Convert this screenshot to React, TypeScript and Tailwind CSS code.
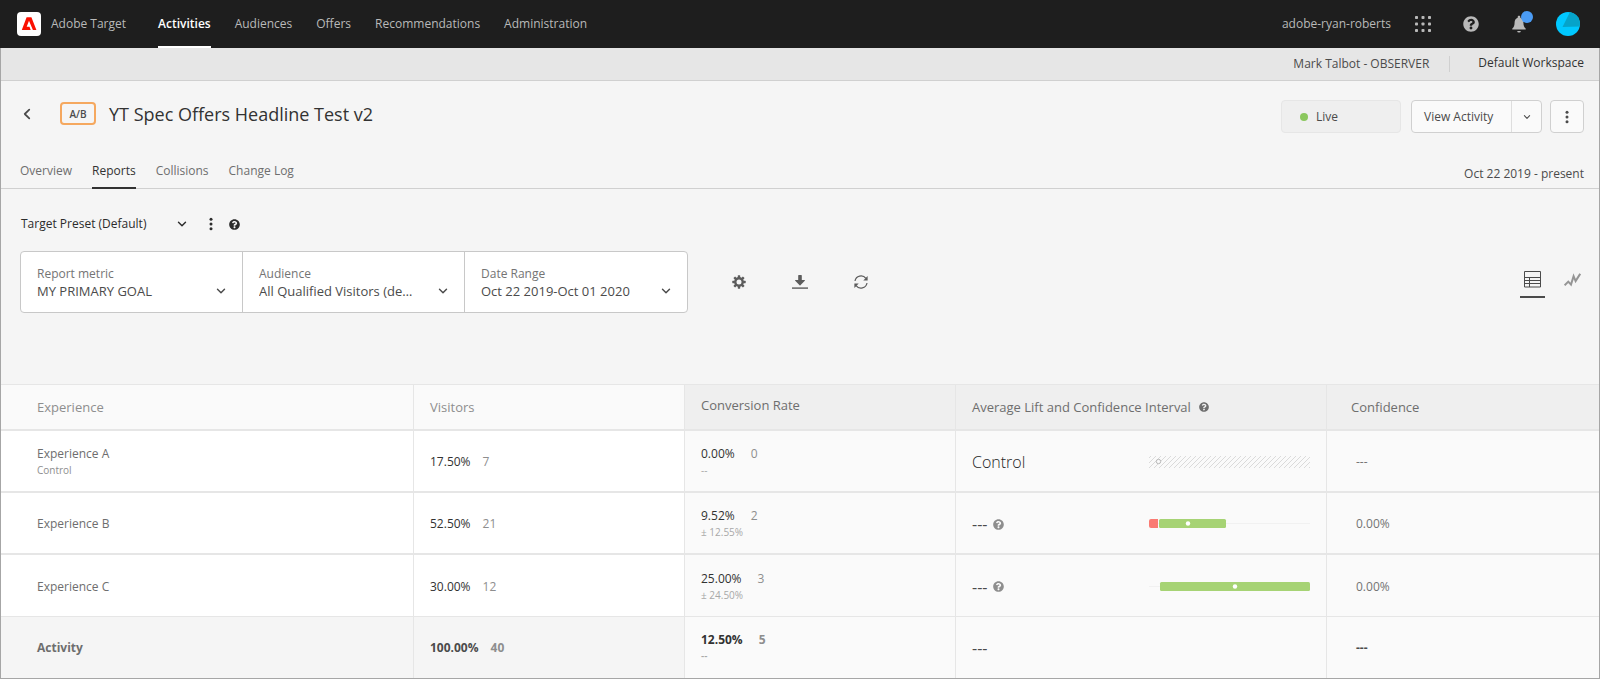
import React from 'react';
import { FaQuestionCircle } from 'react-icons/fa';

const navItems = ['Activities', 'Audiences', 'Offers', 'Recommendations', 'Administration'];
const tabs = ['Overview', 'Reports', 'Collisions', 'Change Log'];

const filters = [
  { id: 'metric', label: 'Report metric', value: 'MY PRIMARY GOAL' },
  { id: 'audience', label: 'Audience', value: 'All Qualified Visitors (de…' },
  { id: 'range', label: 'Date Range', value: 'Oct 22 2019-Oct 01 2020' },
];

interface Interval {
  start: number;
  end: number;
  mean: number;
}

interface ExperienceRow {
  name: string;
  share: string;
  visitors: string;
  rate: string;
  conversions: string;
  margin: string;
  confidence: string;
  control?: boolean;
  interval?: Interval;
}

// interval positions are on the 161 unit wide track, zero line at 11
const rows: ExperienceRow[] = [
  { name: 'Experience A', share: '17.50%', visitors: '7', rate: '0.00%', conversions: '0', margin: '--', confidence: '---', control: true },
  { name: 'Experience B', share: '52.50%', visitors: '21', rate: '9.52%', conversions: '2', margin: '± 12.55%', confidence: '0.00%', interval: { start: 0, end: 77, mean: 39 } },
  { name: 'Experience C', share: '30.00%', visitors: '12', rate: '25.00%', conversions: '3', margin: '± 24.50%', confidence: '0.00%', interval: { start: 11, end: 161, mean: 86 } },
];

function Chevron({ className = '' }: { className?: string }) {
  return (
    <svg className={`pointer-events-none shrink-0 ${className}`} width="10" height="10" viewBox="0 0 10 10" fill="none" stroke="currentColor" strokeWidth="1.4" strokeLinecap="round" strokeLinejoin="round">
      <path d="M1.5 3.2 5 6.8l3.5-3.6" />
    </svg>
  );
}

function MoreDots() {
  return (
    <svg width="4" height="14" viewBox="0 0 4 14" fill="currentColor">
      <circle cx="2" cy="2.2" r="1.5" />
      <circle cx="2" cy="7" r="1.5" />
      <circle cx="2" cy="11.8" r="1.5" />
    </svg>
  );
}

function AdobeLogo() {
  return (
    <svg width="24" height="24" viewBox="0 0 24 24">
      <rect width="24" height="24" rx="4" fill="#fff" />
      <path fill="#fa0f00" d="M9.6 5.2h4.8L19.4 18h-3.5L12 8.8l-2.3 6h2.8l1.2 3.2H4.8z" />
    </svg>
  );
}

function AppsIcon() {
  return (
    <svg width="16" height="16" viewBox="0 0 16 16" fill="currentColor">
      {[0, 6.5, 13].map((y) =>
        [0, 6.5, 13].map((x) => <rect key={`${x}-${y}`} x={x} y={y} width="3" height="3" rx="0.8" />)
      )}
    </svg>
  );
}

function BellIcon() {
  return (
    <svg width="16" height="18" viewBox="0 0 16 18" fill="currentColor">
      <path d="M8 .8c.8 0 1.3.5 1.3 1.3v.6c2 .6 3.1 2.5 3.1 4.9 0 3.2.8 4.7 2.2 5.8.4.4.2 1.2-.4 1.2H1.8c-.6 0-.8-.8-.4-1.2 1.4-1.1 2.2-2.6 2.2-5.8 0-2.4 1.1-4.3 3.1-4.9v-.6C6.7 1.3 7.2.8 8 .8z" />
      <path d="M6.2 15.9h3.6a1.8 1.6 0 0 1-3.6 0z" />
    </svg>
  );
}

function Avatar() {
  return (
    <svg width="24" height="24" viewBox="0 0 24 24">
      <clipPath id="avatar-clip">
        <circle cx="12" cy="12" r="12" />
      </clipPath>
      <g clipPath="url(#avatar-clip)">
        <rect width="24" height="24" fill="#00c8ff" />
        <path d="M14 0 6.5 15 24 14.5V0z" fill="#06a3c9" />
      </g>
    </svg>
  );
}

function GearIcon() {
  return (
    <svg width="14" height="14" viewBox="0 0 14 14">
      <circle cx="7" cy="7" r="3.7" fill="none" stroke="currentColor" strokeWidth="2.4" />
      {[0, 45, 90, 135, 180, 225, 270, 315].map((a) => (
        <rect key={a} x="5.8" y="0.3" width="2.4" height="2.6" rx="0.4" fill="currentColor" transform={`rotate(${a} 7 7)`} />
      ))}
    </svg>
  );
}

function DownloadIcon() {
  return (
    <svg width="16" height="14" viewBox="0 0 16 14" fill="currentColor">
      <path d="M6.2.6c0-.3.2-.6.6-.6h2.4c.4 0 .6.3.6.6V5h2.7c.4 0 .6.4.3.7l-4.4 4.5a.5.5 0 0 1-.8 0L3.2 5.7c-.3-.3-.1-.7.3-.7h2.7z" />
      <rect y="12.4" width="16" height="1.4" />
    </svg>
  );
}

function RefreshIcon() {
  return (
    <svg width="14" height="14" viewBox="0 0 14 14" fill="none" stroke="currentColor" strokeWidth="1.2">
      <path d="M1 6A6.1 6.1 0 0 1 11.9 3.4" />
      <path d="M13 8A6.1 6.1 0 0 1 2.1 10.6" />
      <path d="M13.6 1v4.4H9.3z" fill="currentColor" stroke="none" />
      <path d="M.4 13V8.6h4.3z" fill="currentColor" stroke="none" />
    </svg>
  );
}

function TableIcon() {
  return (
    <svg width="17" height="17" viewBox="0 0 17 17" fill="none" stroke="currentColor">
      <path d="M.5.5h16V16H.5zM.5 6.5h16M.5 9.5h16M.5 12.5h16M5.5 6.5V16" />
    </svg>
  );
}

function TrendIcon() {
  return (
    <svg width="17" height="14" viewBox="0 0 17 14" fill="none" stroke="currentColor" strokeWidth="2">
      <path d="M.6 12.4 4.3 8.6l2.7 3L9.6 3.2l2 4.9L16.2.8" />
    </svg>
  );
}

function IntervalBar({ interval }: { interval?: Interval }) {
  if (!interval) {
    return (
      <svg width="161" height="12" viewBox="0 0 161 12">
        <pattern id="hatch" width="5" height="12" patternUnits="userSpaceOnUse">
          <path d="M-10 12 2 0M-5 12 7 0M0 12 12 0" stroke="#dadada" strokeWidth="1" />
        </pattern>
        <rect width="161" height="12" fill="url(#hatch)" />
        <circle cx="9.5" cy="5.5" r="2.2" fill="#fafafa" stroke="#b8b8b8" />
      </svg>
    );
  }
  const { start, end, mean } = interval;
  const negative = start < 11;
  const positiveStart = negative ? 10 : start;
  return (
    <svg width="161" height="10" viewBox="0 0 161 10">
      <path d="M0 4.500h161" stroke="#f1f1f1" />
      {negative && <path d="M9 0v9H2a2 2 0 0 1-2-2V2a2 2 0 0 1 2-2z" fill="#fa7b73" />}
      <rect x={positiveStart} width={end - positiveStart} height="9" rx="1.5" fill="#a6d374" />
      <circle cx={mean} cy="4.5" r="2.2" fill="#fff" />
    </svg>
  );
}

export default function App() {
  return (
    <div className="bg-[#f5f5f5] font-['Open_Sans',sans-serif] text-xs leading-5 text-[#4b4b4b]">
      {/* Top bar */}
      <header className="flex h-12 items-center bg-[#1e1e1e] pr-5 pl-[17px] text-[#b9b9b9]">
        <a href="#home" className="flex items-center gap-2.5">
          <AdobeLogo />
          <span>Adobe Target</span>
        </a>
        <nav className="ml-8 flex gap-6 self-stretch">
          {navItems.map((item, i) => (
            <a
              key={item}
              href="#nav"
              className={`flex items-center border-y-2 border-t-transparent ${i === 0 ? 'border-b-white font-semibold text-white' : 'border-b-transparent'}`}
            >
              {item}
            </a>
          ))}
        </nav>
        <div className="ml-auto flex items-center">
          <span className="mr-6">adobe-ryan-roberts</span>
          <button aria-label="Apps" className="mr-8"><AppsIcon /></button>
          <button aria-label="Help" className="mr-8"><FaQuestionCircle size={16} /></button>
          <button aria-label="Notifications" className="relative mr-[29px]">
            <BellIcon />
            <span className="absolute -top-1 left-2.5 h-3 w-3 rounded-full bg-[#4b9cf5]" />
          </button>
          <button aria-label="Account"><Avatar /></button>
        </div>
      </header>

      <div className="border-x border-b border-[#a6a6a6]">
        {/* Workspace bar */}
        <div className="flex h-[33px] items-center justify-end border-b border-[#d0d0d0] bg-[#e6e6e6] pr-[15px]">
          <span>Mark Talbot - OBSERVER</span>
          <span className="mx-5 h-4 w-px bg-[#d0d0d0]" />
          <span className="ml-2 pb-0.5 text-[#323232]">Default Workspace</span>
        </div>

        {/* Title */}
        <div className="flex items-center pt-[19px] pr-[15px] pl-4">
          <div className="flex items-center pb-1.5">
            <button aria-label="Back" className="mr-[23px] flex w-5 justify-center">
              <Chevron className="rotate-90 scale-125" />
            </button>
            <span className="flex h-[23px] w-9 items-center justify-center rounded border-2 border-[#f5a85f] text-[10px] font-semibold">A/B</span>
            <h1 className="ml-[13px] text-[18px] text-[#323232]">YT Spec Offers Headline Test v2</h1>
          </div>
          <div className="ml-auto flex items-stretch">
            <div className="mr-2.5 flex h-[33px] w-[120px] items-center gap-2 rounded border border-[#e6e6e6] bg-[#efefef] pl-[18px]">
              <span className="h-2 w-2 rounded-full bg-[#8bc75e]" />
              Live
            </div>
            <div className="mr-2 flex rounded border border-[#d0d0d0] bg-[#fafafa]">
              <button className="w-[100px] border-r border-[#dedede] pl-3 text-left">View Activity</button>
              <button aria-label="More views" className="flex w-[29px] items-center justify-center"><Chevron className="scale-75" /></button>
            </div>
            <button aria-label="More actions" className="flex w-[34px] items-center justify-center rounded border border-[#d0d0d0] bg-[#fafafa]">
              <MoreDots />
            </button>
          </div>
        </div>

        {/* Tabs */}
        <div className="mt-5 flex items-end border-b border-[#d0d0d0] pr-[15px] pl-[19px]">
          <nav className="flex gap-5">
            {tabs.map((tab) => (
              <a
                key={tab}
                href="#tab"
                className={`-mb-px border-b-2 pt-2 pb-1.5 ${tab === 'Reports' ? 'border-[#323232] text-[#323232]' : 'border-transparent text-[#6e6e6e]'}`}
              >
                {tab}
              </a>
            ))}
          </nav>
          <span className="ml-auto pb-1">Oct 22 2019 - present</span>
        </div>

        {/* Preset */}
        <div className="mt-[25px] flex items-center px-5 text-[#2c2c2c]">
          <button className="flex w-[166px] items-center justify-between">
            Target Preset (Default)
            <Chevron />
          </button>
          <button aria-label="Preset options" className="ml-[22px]"><MoreDots /></button>
          <button aria-label="Preset help" className="ml-4"><FaQuestionCircle size={11} /></button>
        </div>

        {/* Filters */}
        <div className="mt-[17px] flex items-center pr-[18px] pl-[19px]">
          <div className="flex divide-x divide-[#c8c8c8] rounded border border-[#c8c8c8] bg-white">
            {filters.map((f) => (
              <div key={f.id} className="flex h-[60px] w-[222px] flex-col justify-center px-4 pt-0.5">
                <label htmlFor={f.id} className="text-xs leading-4 text-[#747474]">{f.label}</label>
                <div className="flex items-center">
                  <select id={f.id} className="min-w-0 flex-1 appearance-none text-[13px] leading-[18px]">
                    <option>{f.value}</option>
                  </select>
                  <Chevron />
                </div>
              </div>
            ))}
          </div>
          <div className="ml-11 flex items-center gap-[46px] text-[#5c5c5c]">
            <button aria-label="Settings"><GearIcon /></button>
            <button aria-label="Download"><DownloadIcon /></button>
            <button aria-label="Refresh"><RefreshIcon /></button>
          </div>
          <div className="ml-auto flex items-start gap-[19px] pt-1">
            <button aria-label="Table view" className="border-b-2 border-[#4b4b4b] px-1 pb-2 text-[#4b4b4b]"><TableIcon /></button>
            <button aria-label="Graph view" className="pt-0.5 text-[#959595]"><TrendIcon /></button>
          </div>
        </div>

        {/* Report */}
        <table className="mt-[71px] w-full table-fixed border-separate border-spacing-0 border-t border-[#e6e6e6] text-left">
          <colgroup>
            <col className="w-[413px]" />
            <col className="w-[271px]" />
            <col className="w-[271px]" />
            <col className="w-[371px]" />
            <col className="w-[272px]" />
          </colgroup>
          <thead>
            <tr className="h-[46px] text-[13px] text-[#6e6e6e] *:border-b-2 *:border-[#e6e6e6] *:font-normal">
              <th className="border-r bg-[#fafafa] pl-9 text-[#8e8e8e]">Experience</th>
              <th className="border-r bg-[#fafafa] pl-4 text-[#8e8e8e]">Visitors</th>
              <th className="border-r bg-[#efefef] pb-1 pl-4">Conversion Rate</th>
              <th className="border-r bg-[#efefef] pl-4">
                <span className="flex items-center gap-2">
                  Average Lift and Confidence Interval
                  <FaQuestionCircle size={10} />
                </span>
              </th>
              <th className="bg-[#efefef] pl-6">Confidence</th>
            </tr>
          </thead>
          <tbody className="text-xs leading-4">
            {rows.map((row, i) => (
              <tr
                key={row.name}
                className={`h-[62px] *:border-[#e6e6e6] *:pt-0.5 ${i === rows.length - 1 ? '*:border-b' : '*:border-b-2'}`}
              >
                <td className="border-r bg-white pl-9 text-[#6e6e6e]">
                  {row.name}
                  {row.control && <div className="text-[10px] text-[#8e8e8e]">Control</div>}
                </td>
                <td className="border-r bg-white pl-4 text-[#323232]">
                  {row.share}
                  <span className="ml-3 text-[#8e8e8e]">{row.visitors}</span>
                </td>
                <td className="border-r bg-[#fafafa] pl-4 text-[#323232]">
                  {row.rate}
                  <span className="ml-4 text-[#8e8e8e]">{row.conversions}</span>
                  <div className="text-[10px] text-[#a8a8a8]">{row.margin}</div>
                </td>
                <td className="border-r bg-[#fafafa] px-4">
                  <div className="flex items-center justify-between">
                    {row.control ? (
                      <span className="text-[16px] font-light text-[#1e1e1e]">Control</span>
                    ) : (
                      <span className="flex items-center gap-1.5">
                        <span className="text-[16px]">---</span>
                        <FaQuestionCircle size={11} className="text-[#8e8e8e]" />
                      </span>
                    )}
                    <IntervalBar interval={row.interval} />
                  </div>
                </td>
                <td className="bg-[#fafafa] pl-[29px] text-[#747474]">{row.confidence}</td>
              </tr>
            ))}
            <tr className="h-[61px] font-bold *:border-[#e6e6e6]">
              <td className="border-r bg-[#f5f5f5] pl-9 text-[#6e6e6e]">Activity</td>
              <td className="border-r bg-[#f5f5f5] pl-4">
                100.00%
                <span className="ml-3 text-[#8e8e8e]">40</span>
              </td>
              <td className="border-r bg-[#fafafa] pl-4 text-[#323232]">
                12.50%
                <span className="ml-4 text-[#8e8e8e]">5</span>
                <div className="text-[10px] font-semibold text-[#a8a8a8]">--</div>
              </td>
              <td className="border-r bg-[#fafafa] pl-4 text-[16px] font-normal">---</td>
              <td className="bg-[#fafafa] pl-[29px]">---</td>
            </tr>
          </tbody>
        </table>
      </div>
    </div>
  );
}
